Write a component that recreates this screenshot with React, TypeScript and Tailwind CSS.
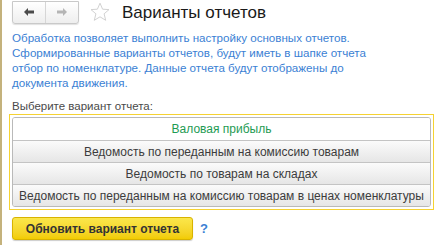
import React from "react";

const variants = [
  "Валовая прибыль",
  "Ведомость по переданным на комиссию товарам",
  "Ведомость по товарам на складах",
  "Ведомость по переданным на комиссию товарам в ценах номенклатуры",
];

const description = [
  "Обработка позволяет выполнить настройку основных отчетов.",
  "Сформированные варианты отчетов, будут иметь в шапке отчета",
  "отбор по номенклатуре. Данные отчета будут отображены до",
  "документа движения.",
];

function NavArrow({ dir, color }: { dir: "left" | "right"; color: string }) {
  return (
    <svg width="10" height="8" viewBox="0 0 10 8">
      {dir === "left" ? (
        <path d="M0 4 L4 0 L4 2.5 L10 2.5 L10 5.5 L4 5.5 L4 8 Z" fill={color} />
      ) : (
        <path d="M10 4 L6 0 L6 2.5 L0 2.5 L0 5.5 L6 5.5 L6 8 Z" fill={color} />
      )}
    </svg>
  );
}

export default function App() {
  const selected = 0;

  return (
    <div
      className="w-[445px] h-[245px] bg-white border-l-2 border-[#c4b27c] pl-[10px] overflow-hidden"
      style={{ fontFamily: '"Liberation Sans", Arial, sans-serif' }}
    >
      {/* Шапка */}
      <header className="flex items-center h-[26px] -mt-[1px]">
        <div className="flex h-[23px] w-[67px] border border-[#c9c9c9] rounded-b-[3px] bg-gradient-to-b from-white to-[#eeeeee] shadow-[0_1px_1px_rgba(0,0,0,0.12)]">
          <div className="flex-1 flex items-center justify-center border-r border-[#d6d6d6]">
            <NavArrow dir="left" color="#4a4a4a" />
          </div>
          <div className="flex-1 flex items-center justify-center">
            <NavArrow dir="right" color="#b5b5b5" />
          </div>
        </div>
        <svg className="ml-[11px]" width="20" height="20" viewBox="0 0 20 20">
          <path
            d="M10 1.2 L12.6 7.2 L19 7.6 L14.1 11.8 L15.7 18.3 L10 14.8 L4.3 18.3 L5.9 11.8 L1 7.6 L7.4 7.2 Z"
            fill="none"
            stroke="#d2d2d2"
            strokeWidth="1"
          />
        </svg>
        <h1 className="ml-[12px] text-[17px] text-[#1a1a1a] leading-none">Варианты отчетов</h1>
      </header>

      {/* Описание */}
      <p className="mt-[5px] text-[11.6px] leading-[15px] text-[#3b7fd4] whitespace-nowrap">
        {description.map((line) => (
          <span key={line} className="block">
            {line}
          </span>
        ))}
      </p>

      {/* Выбор варианта */}
      <div className="mt-[9px] text-[11.5px] leading-[15px] text-[#4a4a4a]">Выберите вариант отчета:</div>

      <div className="-ml-[3px] w-[425px] border border-[#f5d232] p-[2px]">
        <div className="border border-[#b9b9b9] rounded-[3px] overflow-hidden">
          {variants.map((v, i) => (
            <div
              key={v}
              className={
                "h-[22px] flex items-center justify-center text-[12px] " +
                (i > 0 ? "border-t border-[#c4c4c4] " : "") +
                (i === selected
                  ? "bg-white text-[#1e9b53]"
                  : "bg-gradient-to-b from-[#fbfbfb] to-[#e6e6e6] text-[#3c3c3c]")
              }
            >
              {v}
            </div>
          ))}
        </div>
      </div>

      {/* Кнопка */}
      <div className="mt-[7px] flex items-center">
        <button className="h-[23px] w-[181px] rounded-[3px] border border-[#d8b300] bg-gradient-to-b from-[#fbe74a] to-[#f2cc00] text-[12px] font-bold text-[#333333] shadow-[0_1px_1px_rgba(0,0,0,0.2)]">
          Обновить вариант отчета
        </button>
        <span className="ml-[7px] text-[13px] font-bold text-[#3b7fd4]">?</span>
      </div>
    </div>
  );
}
